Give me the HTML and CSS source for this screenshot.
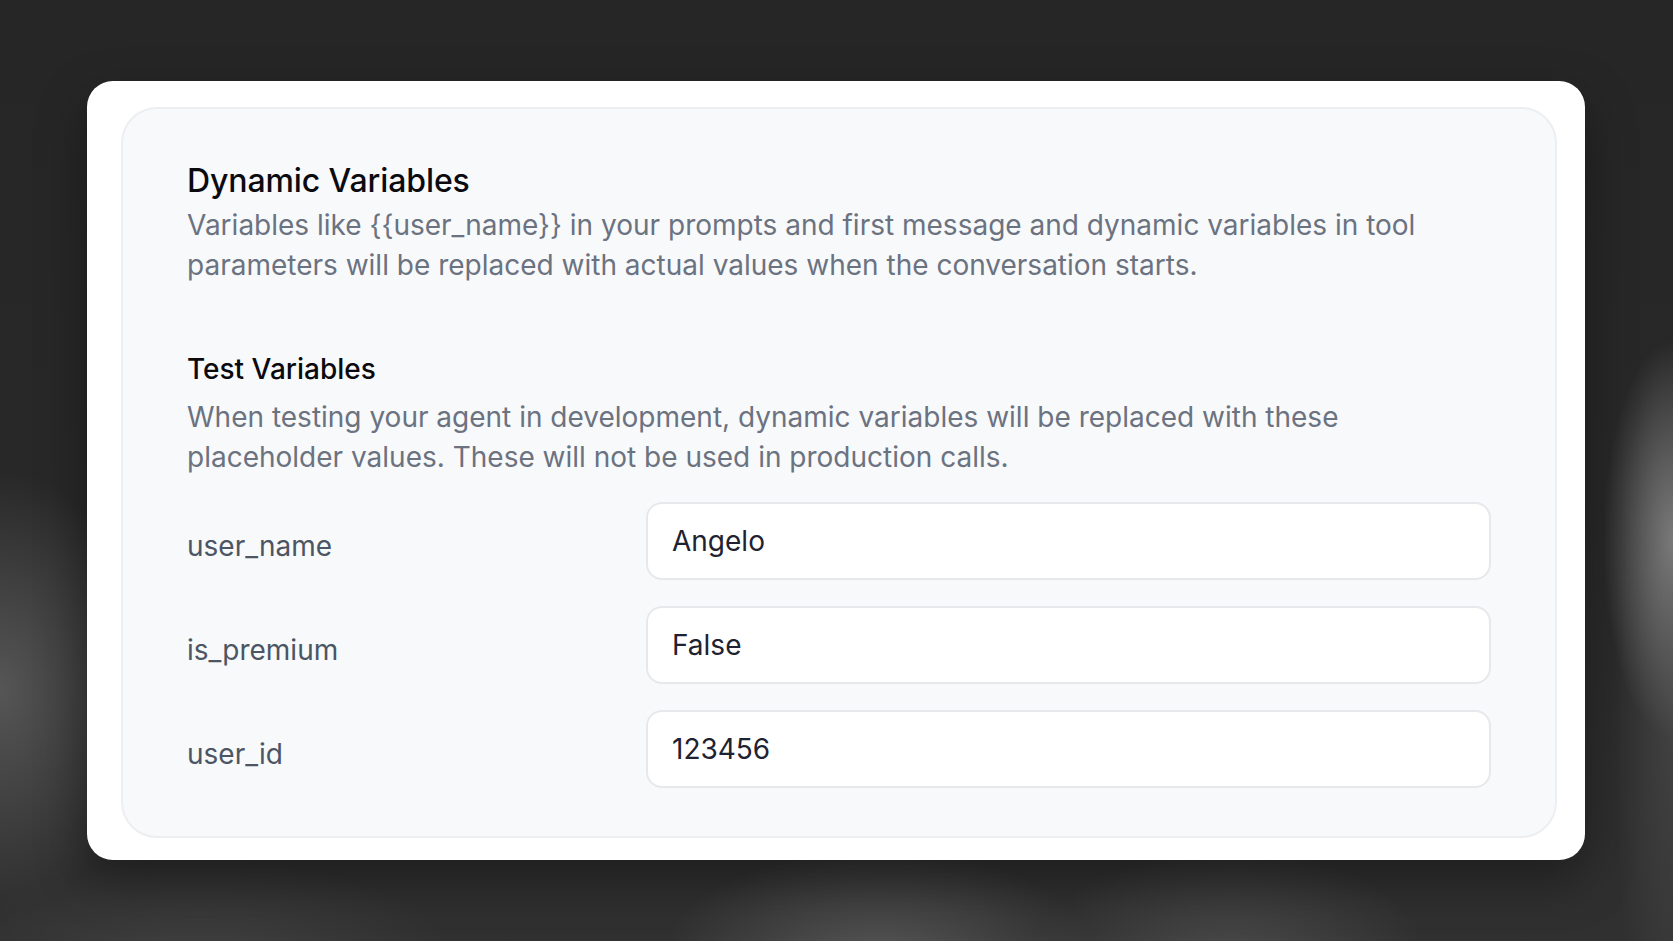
FILE: index.html
```html
<!DOCTYPE html>
<html lang="en">
<head>
<meta charset="utf-8">
<title>Dynamic Variables</title>
<link rel="stylesheet" href="styles.css">
</head>
<body>
<div class="stage">
  <div class="card">
    <section class="panel">
      <h2 class="title">Dynamic Variables</h2>
      <p class="desc">Variables like {{user_name}} in your prompts and first message and dynamic variables in tool parameters will be replaced with actual values when the conversation starts.</p>
      <h3 class="subtitle">Test Variables</h3>
      <p class="desc desc-test">When testing your agent in development, dynamic variables will be replaced with these placeholder values. These will not be used in production calls.</p>
      <div class="vars">
        <div class="row">
          <label class="label">user_name</label>
          <div class="input">Angelo</div>
        </div>
        <div class="row">
          <label class="label">is_premium</label>
          <div class="input">False</div>
        </div>
        <div class="row">
          <label class="label">user_id</label>
          <div class="input">123456</div>
        </div>
      </div>
    </section>
  </div>
</div>
</body>
</html>
```

FILE: styles.css
```css
html, body {
  margin: 0;
  padding: 0;
  height: 100%;
}
body {
  font-family: Inter, "Noto Sans", sans-serif;
  background-color: #262626;
  background-image:
    radial-gradient(ellipse 70px 200px at 1673px 540px, rgba(125,125,125,0.95), rgba(125,125,125,0) 100%),
    radial-gradient(ellipse 60px 380px at 1673px 720px, rgba(80,80,80,0.6), rgba(80,80,80,0) 100%),
    radial-gradient(ellipse 150px 220px at 0px 690px, rgba(100,100,100,0.75), rgba(100,100,100,0) 100%),
    radial-gradient(ellipse 220px 110px at 880px 960px, rgba(110,110,110,0.6), rgba(110,110,110,0) 100%),
    radial-gradient(ellipse 200px 110px at 1230px 960px, rgba(95,95,95,0.55), rgba(95,95,95,0) 100%),
    radial-gradient(ellipse 260px 100px at 200px 960px, rgba(80,80,80,0.5), rgba(80,80,80,0) 100%),
    linear-gradient(180deg, #262626 0%, #282828 55%, #303030 100%);
  overflow: hidden;
}
.stage {
  width: 1673px;
  height: 941px;
  box-sizing: border-box;
  padding: 81px 88px 0 87px;
}
.card {
  width: 1498px;
  height: 779px;
  box-sizing: border-box;
  background: #ffffff;
  border-radius: 26px;
  padding: 26px 28px 22px 34px;
  box-shadow: 0 20px 50px rgba(0,0,0,0.35);
}
.panel {
  height: 100%;
  box-sizing: border-box;
  background: #f8f9fb;
  border: 2px solid #eceef1;
  border-radius: 36px;
  padding: 48px 64px 46px 64px;
}
.title {
  margin: 0;
  font-size: 32px;
  line-height: 48px;
  font-weight: 500;
  color: #0b0b0f;
  letter-spacing: -0.1px;
}
.desc {
  margin: 0;
  font-size: 28px;
  line-height: 40px;
  font-weight: 400;
  color: #6b7280;
}
.subtitle {
  margin: 64px 0 0 0;
  font-size: 28px;
  line-height: 40px;
  font-weight: 500;
  color: #0b0b0f;
}
.desc-test {
  margin-top: 8px;
}
.vars {
  margin-top: 25px;
  display: flex;
  flex-direction: column;
  gap: 26px;
}
.row {
  display: grid;
  grid-template-columns: 459px 1fr;
  align-items: center;
}
.label {
  font-size: 28px;
  line-height: 40px;
  color: #4b5563;
  padding-top: 9px;
}
.input {
  height: 78px;
  box-sizing: border-box;
  background: #ffffff;
  border: 2px solid #e6e8ec;
  border-radius: 16px;
  padding: 0 24px;
  display: flex;
  align-items: center;
  font-size: 28px;
  color: #1f2230;
}
```
